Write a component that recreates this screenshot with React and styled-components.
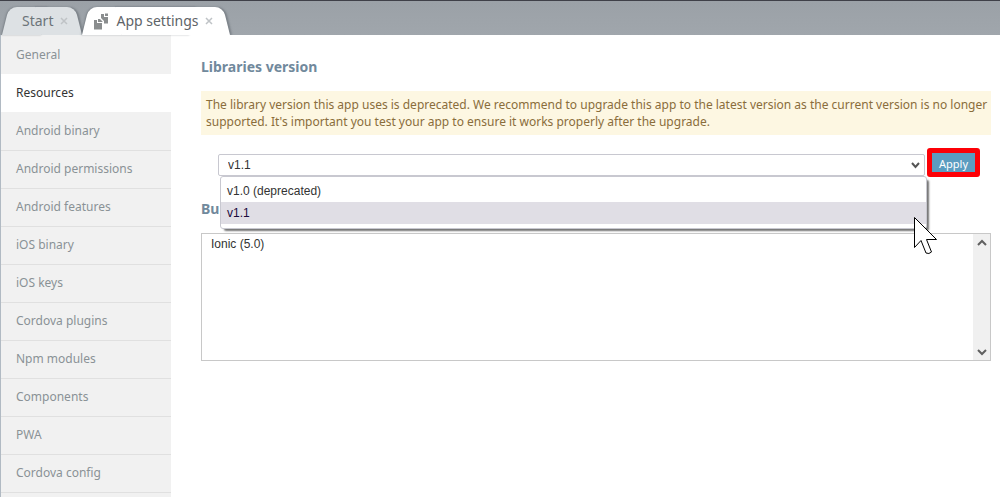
import { useState } from "react";
import styled, { createGlobalStyle } from "styled-components";

const GlobalStyle = createGlobalStyle`
  * {
    box-sizing: border-box;
  }
  body {
    margin: 0;
    background: #fff;
    font-family: "Noto Sans", sans-serif;
    font-size: 12px;
    overflow: hidden;
  }
`;

const sections = [
  "General",
  "Resources",
  "Android binary",
  "Android permissions",
  "Android features",
  "iOS binary",
  "iOS keys",
  "Cordova plugins",
  "Npm modules",
  "Components",
  "PWA",
  "Cordova config",
];

const versions = [
  { value: "v1.0", label: "v1.0 (deprecated)" },
  { value: "v1.1", label: "v1.1" },
];

const Page = styled.div`
  display: flex;
  flex-direction: column;
  height: 100vh;
`;

const TabBar = styled.header`
  display: flex;
  flex: none;
  align-items: flex-end;
  height: 35px;
  padding-left: 2px;
  border-top: 1px solid #3f4048;
  background: linear-gradient(#9ba1a7, #a0a6ac);
`;

const Tab = styled.div`
  position: relative;
  z-index: ${({ $active }) => ($active ? 2 : 1)};
  isolation: isolate;
  display: flex;
  align-items: center;
  height: 28px;
  padding: ${({ $active }) => ($active ? "0 18px 0 12px" : "0 14px 0 20px")};
  color: ${({ $active }) => ($active ? "#5e6468" : "#6c7479")};

  &::before,
  &::after {
    content: "";
    position: absolute;
    z-index: -1;
    top: 0;
    bottom: 0;
    background: ${({ $active }) => ($active ? "#fff" : "#dde1e4")};
  }
  &::before {
    left: 0;
    right: 40px;
    border-top-left-radius: 8px;
    transform: skewX(-14deg);
    transform-origin: bottom;
    box-shadow: -1px 0 2px rgba(70, 78, 86, 0.4);
  }
  &::after {
    left: 30px;
    right: 0;
    border-top-right-radius: 8px;
    transform: skewX(14deg);
    transform-origin: bottom;
    box-shadow: 2px 0 2px rgba(70, 78, 86, 0.4);
    clip-path: inset(-2px -6px 0 10px);
  }
`;

const TabButton = styled.button`
  display: flex;
  align-items: center;
  gap: 7px;
  padding: 0;
  border: 0;
  background: none;
  color: inherit;
  font: 14px/20px "Noto Sans", sans-serif;
`;

const CloseButton = styled.button`
  display: flex;
  margin-left: ${({ $active }) => ($active ? "6px" : "7px")};
  padding: 0;
  border: 0;
  background: none;
  color: #bfc3c6;
`;

const Body = styled.div`
  display: flex;
  flex: 1;
  min-height: 0;
`;

const Sidebar = styled.nav`
  flex: none;
  width: 171px;
  padding-top: 1px;
  overflow: hidden;
  border-left: 1px solid #b1bac3;
  background: #f1f1f1;
`;

const SidebarLink = styled.a`
  display: block;
  height: 38px;
  padding: 0 15px;
  border-top: 1px solid #e0e0e0;
  color: #8a9296;
  line-height: 36px;
  text-decoration: none;

  &:first-child,
  &[aria-current] + & {
    border-top-color: #f1f1f1;
  }
  &:last-child {
    height: 39px;
    border-bottom: 1px solid #e0e0e0;
  }
  &[aria-current] {
    border-color: #fff;
    background: #fff;
    color: #333;
  }
`;

const Main = styled.main`
  flex: 1;
  min-width: 0;
  padding: 22px 9px 0 30px;
`;

const Heading = styled.h2`
  margin: 0;
  color: #71899c;
  font-size: 14px;
  line-height: 20px;
`;

const Notice = styled.p`
  margin: 14px 0 13px;
  padding: 5px 0 5px 5px;
  background: #fdf7e2;
  color: #8a6d3b;
  line-height: 17px;
`;

const VersionRow = styled.div`
  display: flex;
  align-items: center;
  gap: 2px;
  padding: 0 11px 0 17px;
  margin-bottom: 22px;
`;

const Picker = styled.div`
  position: relative;
  display: flex;
  flex: 1;
  margin-top: 4px;
`;

const VersionSelect = styled.select`
  width: 100%;
  height: 22px;
  padding: 0 9px;
  appearance: none;
  border: 1px solid #c8c8d0;
  border-radius: 2px;
  background: #fff;
  color: #333;
  font: 12px "Liberation Sans", sans-serif;
`;

const Arrow = styled.svg`
  position: absolute;
  top: 8px;
  right: 5px;
  pointer-events: none;
`;

const Menu = styled.div`
  position: absolute;
  z-index: 3;
  top: 22px;
  left: 2px;
  right: -2px;
  padding: 3px 0 4px;
  border: 1px solid #c8c8d0;
  border-radius: 3px;
  background: #fff;
  box-shadow: 3px 3px 2px -1px rgba(0, 0, 0, 0.55);
`;

const MenuItem = styled.button`
  display: block;
  width: 100%;
  height: 22px;
  padding: 0 6px;
  border: 0;
  background: ${({ $selected }) => ($selected ? "#e0dee5" : "#fff")};
  color: ${({ $selected }) => ($selected ? "#1b0a3c" : "#333")};
  font: 12px/22px "Liberation Sans", sans-serif;
  text-align: left;
`;

const ApplyFrame = styled.div`
  border: 5px solid #fd0006;
  border-radius: 3px;
`;

const ApplyButton = styled.button`
  display: block;
  height: 19px;
  padding: 0 7px;
  border: 0;
  background: #5b9cc0;
  color: #fff;
  font: 11px/21px "Noto Sans", sans-serif;
`;

const ListFrame = styled.div`
  display: flex;
  height: 128px;
  margin-top: 14px;
  border: 1px solid #c8c8c8;
`;

const LibraryList = styled.select`
  flex: 1;
  min-width: 0;
  padding: 3px 7px;
  overflow: hidden;
  border: 0;
  outline: 0;
  background: #fff;
  color: #333;
  font: 12px/18px "Liberation Sans", sans-serif;
`;

const ScrollTrack = styled.div`
  display: flex;
  flex-direction: column;
  justify-content: space-between;
  width: 17px;
  background: #f0f0f0;
`;

const ScrollButton = styled.button`
  display: flex;
  align-items: center;
  justify-content: center;
  height: 17px;
  padding: 0;
  border: 0;
  background: none;
  color: #606060;
`;

const Pointer = styled.svg`
  position: absolute;
  z-index: 4;
  top: 63px;
  right: -13px;
  pointer-events: none;
`;

const CloseIcon = () => (
  <svg width="8" height="8" viewBox="0 0 8 8" fill="none" stroke="currentColor" strokeWidth="1.5">
    <path d="M1 1l6 6M7 1L1 7" />
  </svg>
);

const SettingsIcon = () => (
  <svg width="15" height="17" viewBox="0 0 15 17" fill="#8a8d8e">
    <path d="M0 7h3v3h5v6.500H0z" />
    <path d="M4 6h2l2.500 2.500V9H4z" />
    <path d="M7 1h3v3h4v6.500h-4V8L7 5z" />
    <path d="M11 0.500h3V3h-3z" />
  </svg>
);

const Chevron = ({ up }) => (
  <svg width="10" height="8" viewBox="0 0 10 8" fill="none" stroke="currentColor" strokeWidth="2">
    <path d={up ? "M1 6l4-4 4 4" : "M1 2l4 4 4-4"} />
  </svg>
);

const App = () => {
  const [section, setSection] = useState("Resources");
  const [version, setVersion] = useState("v1.1");
  const [open, setOpen] = useState(true);

  const pick = (value) => {
    setVersion(value);
    setOpen(false);
  };

  return (
    <Page>
      <GlobalStyle />
      <TabBar>
        <Tab>
          <TabButton>Start</TabButton>
          <CloseButton aria-label="Close Start">
            <CloseIcon />
          </CloseButton>
        </Tab>
        <Tab $active>
          <TabButton>
            <SettingsIcon />
            App settings
          </TabButton>
          <CloseButton $active aria-label="Close App settings">
            <CloseIcon />
          </CloseButton>
        </Tab>
      </TabBar>
      <Body>
        <Sidebar>
          {sections.map((name) => (
            <SidebarLink
              key={name}
              href="#settings"
              aria-current={name === section ? "page" : undefined}
              onClick={() => setSection(name)}
            >
              {name}
            </SidebarLink>
          ))}
        </Sidebar>
        <Main>
          <Heading>Libraries version</Heading>
          <Notice>
            The library version this app uses is deprecated. We recommend to upgrade this app to the
            latest version as the current version is no longer supported. It's important you test
            your app to ensure it works properly after the upgrade.
          </Notice>
          <VersionRow>
            <Picker>
              <VersionSelect
                aria-label="Libraries version"
                value={version}
                onChange={(e) => pick(e.target.value)}
              >
                {versions.map((v) => (
                  <option key={v.value} value={v.value}>
                    {v.value}
                  </option>
                ))}
              </VersionSelect>
              <Arrow width="9" height="7" viewBox="0 0 9 7" fill="none" stroke="#555" strokeWidth="2">
                <path d="M1 1l3.500 4L8 1" />
              </Arrow>
              {open && (
                <Menu role="listbox" aria-label="Versions">
                  {versions.map((v) => (
                    <MenuItem
                      key={v.value}
                      role="option"
                      aria-selected={v.value === version}
                      $selected={v.value === version}
                      onClick={() => pick(v.value)}
                    >
                      {v.label}
                    </MenuItem>
                  ))}
                </Menu>
              )}
              <Pointer width="24" height="38" viewBox="0 0 24 38" fill="#fff" stroke="#000">
                <path d="M.5.500v30l6.500-7 5 12.500q3 1.500 5.500-1L12.500 22.500H22.500z" />
              </Pointer>
            </Picker>
            <ApplyFrame>
              <ApplyButton>Apply</ApplyButton>
            </ApplyFrame>
          </VersionRow>
          <Heading>Bu</Heading>
          <ListFrame>
            <LibraryList size="6" aria-label="Bu">
              <option>Ionic (5.0)</option>
            </LibraryList>
            <ScrollTrack>
              <ScrollButton aria-label="Scroll up">
                <Chevron up />
              </ScrollButton>
              <ScrollButton aria-label="Scroll down">
                <Chevron />
              </ScrollButton>
            </ScrollTrack>
          </ListFrame>
        </Main>
      </Body>
    </Page>
  );
};

export default App;
